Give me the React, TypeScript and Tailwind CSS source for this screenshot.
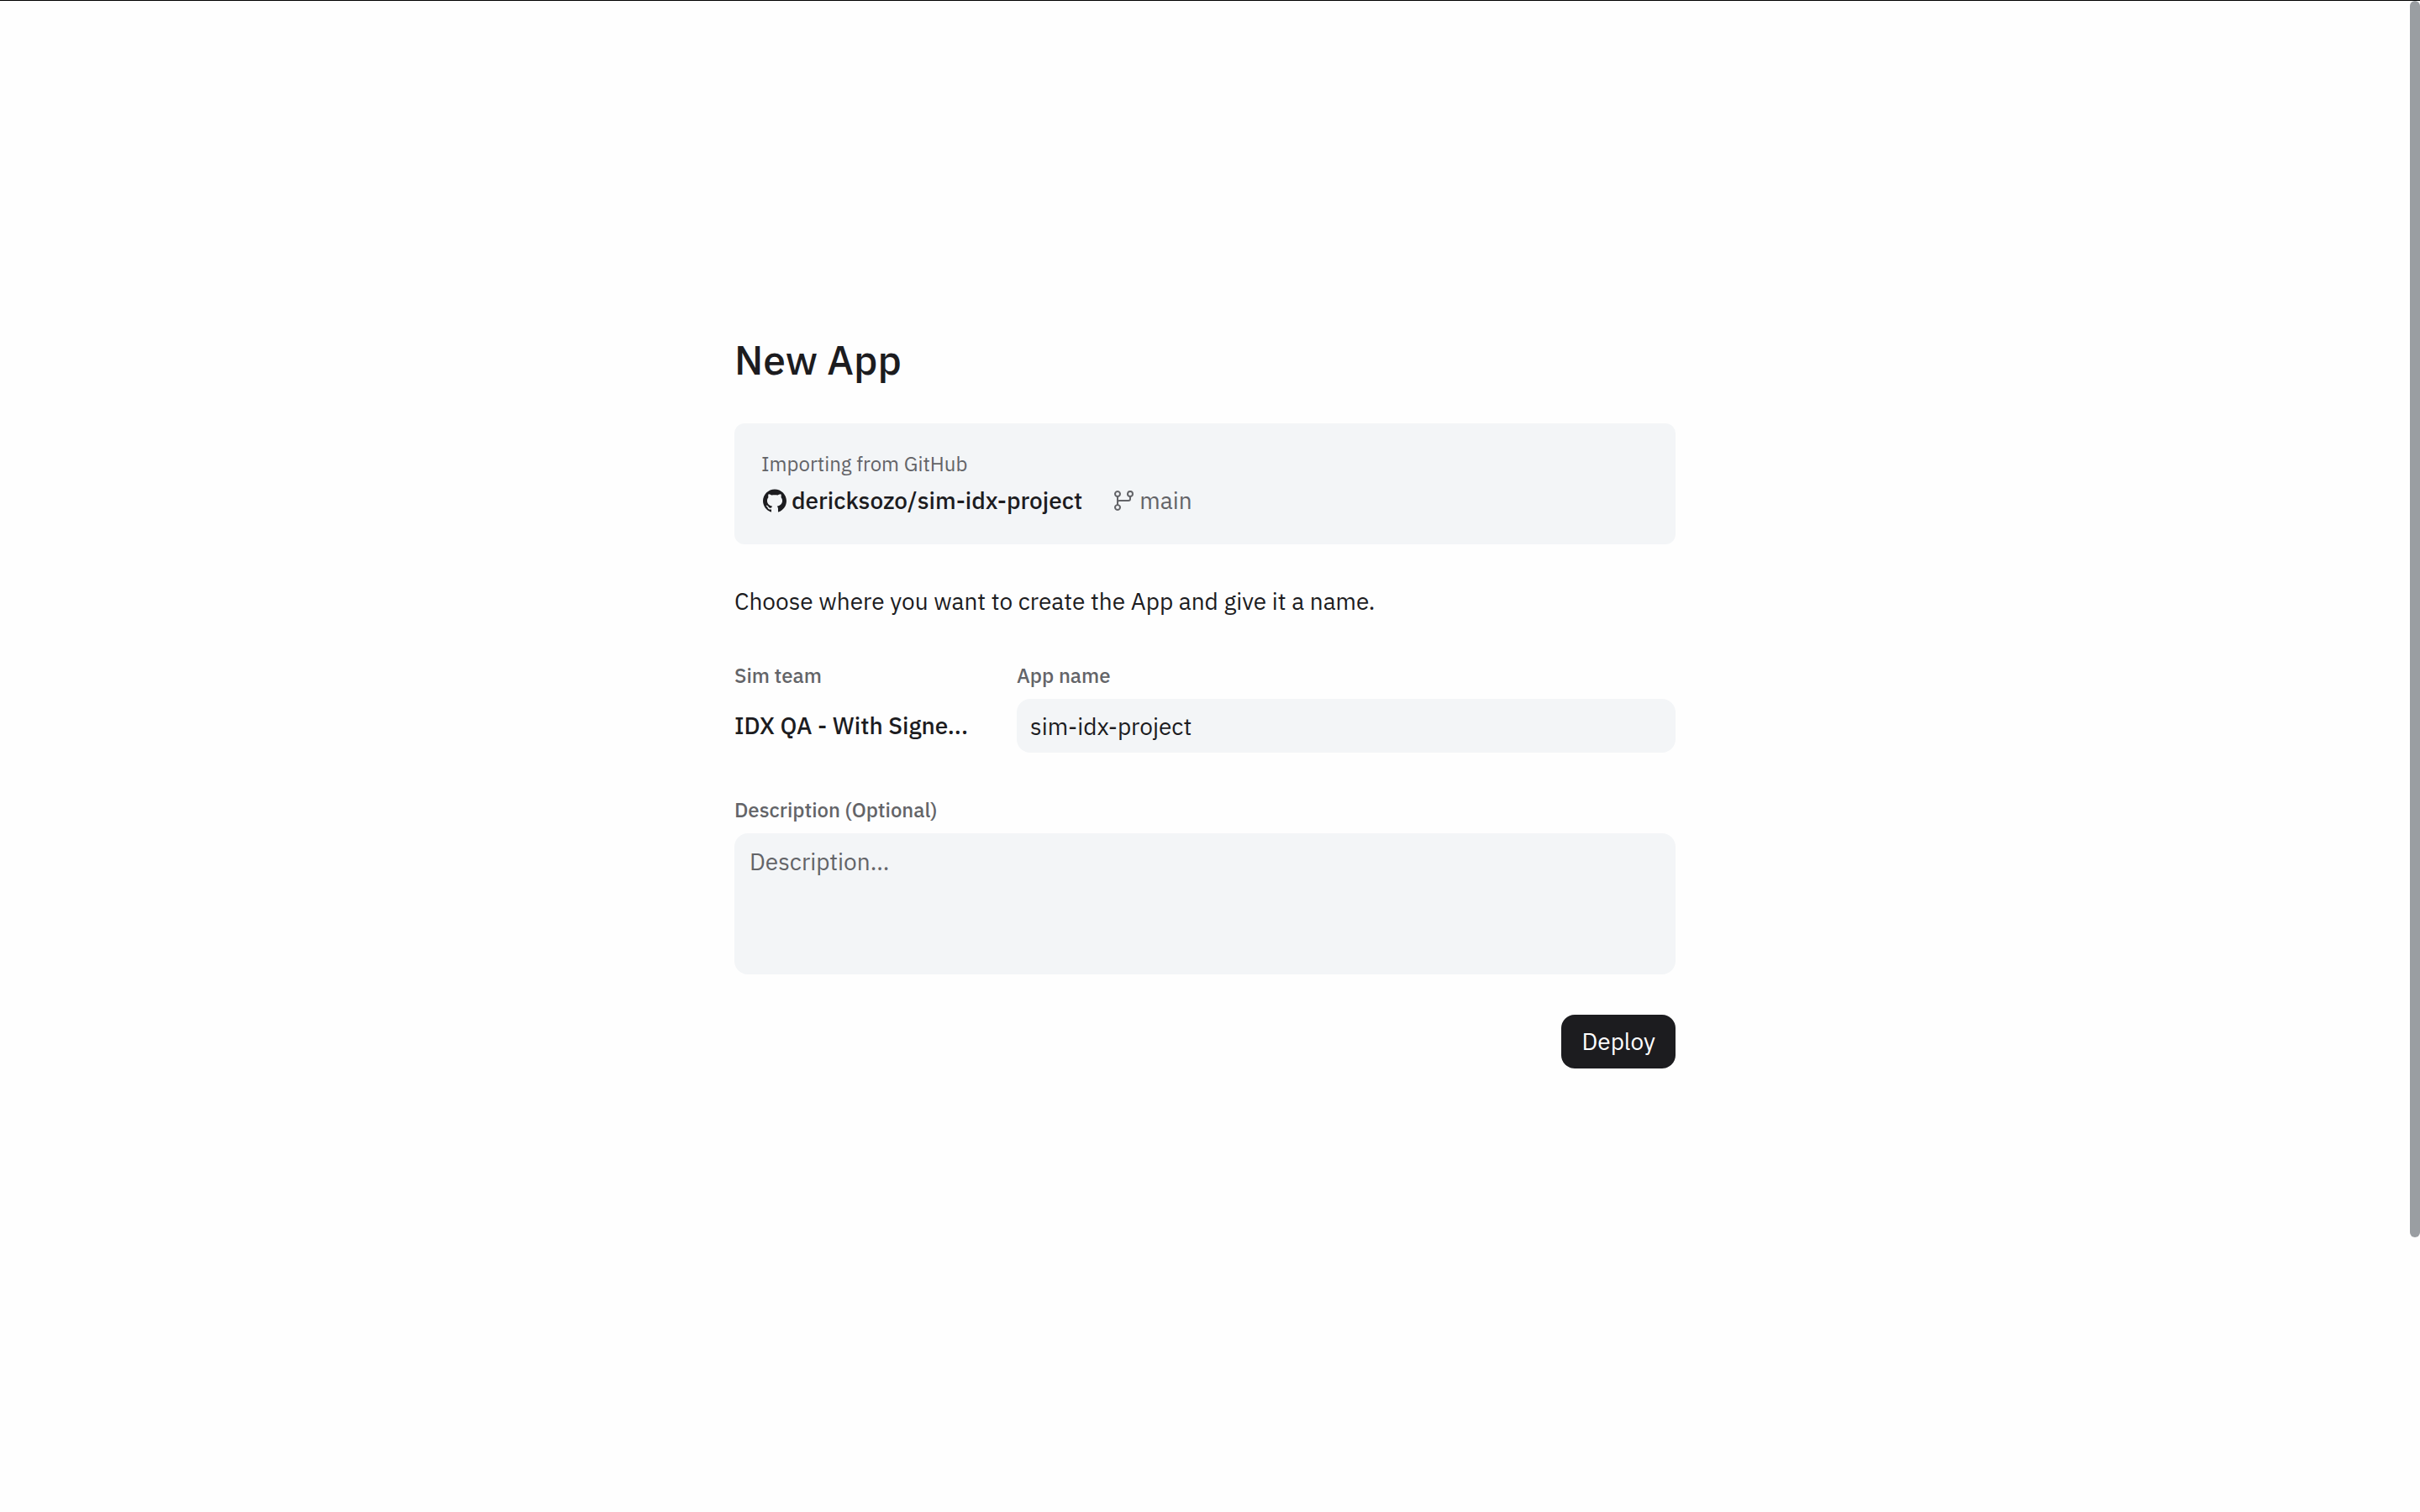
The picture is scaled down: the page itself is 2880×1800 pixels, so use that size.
import { AiFillGithub } from "react-icons/ai";
import { PiGitBranch } from "react-icons/pi";

const label = "text-[24px] leading-8 font-medium text-[#636468]";
const field = "rounded-2xl bg-[#f3f5f7] text-[28px] text-[#1c1c1f] outline-none";

function SourceCard() {
  return (
    <section className="mt-11 flex flex-col gap-2 rounded-xl bg-[#f3f5f7] p-8">
      <p className="text-[24px] leading-8 text-[#636468]">Importing from GitHub</p>
      <div className="flex items-center gap-8 text-[28px] leading-10">
        <a href="#repository" className="flex items-center gap-1 font-medium">
          <AiFillGithub className="size-8" aria-hidden="true" />
          dericksozo/sim-idx-project
        </a>
        <span className="flex items-center gap-1 text-[#636468]">
          <PiGitBranch className="size-8" aria-hidden="true" />
          main
        </span>
      </div>
    </section>
  );
}

export default function App() {
  return (
    <div className="flex min-h-screen items-start border-t border-black bg-[#fefefe] font-['IBM_Plex_Sans',Roboto,sans-serif] text-[#1c1c1f]">
      <main className="flex flex-1 justify-center pt-[399px] pb-32">
        <form className="w-full max-w-[1120px]" onSubmit={(e) => e.preventDefault()}>
          <h1 className="pb-1 text-[48px] leading-[56px] font-medium">New App</h1>
          <SourceCard />
          <p className="mt-12 text-[28px] leading-10">
            Choose where you want to create the App and give it a name.
          </p>
          <div className="mt-13 flex">
            <div className="flex w-3/10 flex-col gap-3">
              <span className={label}>Sim team</span>
              <span className="text-[28px] leading-[64px] font-medium">IDX QA - With Signe...</span>
            </div>
            <div className="flex flex-1 flex-col gap-3">
              <label htmlFor="app-name" className={label}>App name</label>
              <input
                id="app-name"
                defaultValue="sim-idx-project"
                className={`${field} h-16 px-4 leading-10`}
              />
            </div>
          </div>
          <div className="mt-13 flex flex-col gap-3">
            <label htmlFor="description" className={label}>Description (Optional)</label>
            <textarea
              id="description"
              placeholder="Description..."
              className={`${field} h-42 resize-none px-[18px] py-4 leading-9 placeholder:text-[#636468]`}
            />
          </div>
          <div className="mt-12 flex justify-end">
            <button
              type="submit"
              className="h-16 rounded-2xl bg-[#1c1c1f] px-6 text-[28px] text-white"
            >
              Deploy
            </button>
          </div>
        </form>
      </main>
      <div className="h-[1472px] w-3 rounded-full bg-[#9a9ea2]" aria-hidden="true" />
    </div>
  );
}
